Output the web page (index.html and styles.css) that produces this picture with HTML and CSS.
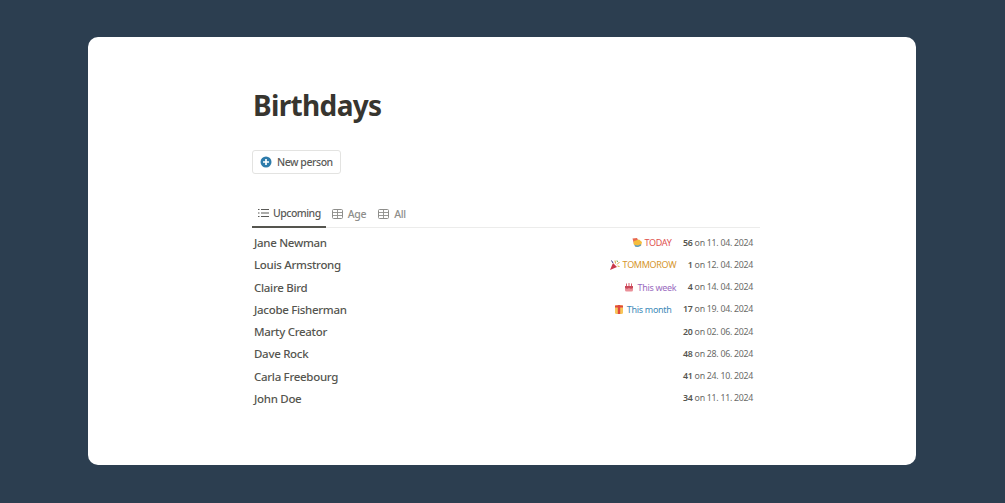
FILE: index.html
```html
<!DOCTYPE html>
<html lang="en">
<head>
<meta charset="utf-8">
<title>Birthdays</title>
<link rel="stylesheet" href="styles.css">
</head>
<body>
<main class="card">
  <div class="content">
    <h1 class="title">Birthdays</h1>
    <button class="new-btn">
      <svg class="plus" viewBox="0 0 12 12"><circle cx="6" cy="6" r="5.500" fill="#2e7cab"/><path d="M6 3v6M3 6h6" stroke="#fff" stroke-width="1.700"/></svg>
      New person
    </button>
    <nav class="tabs">
      <div class="tab active">
        <svg class="tab-ic" viewBox="0 0 11 10"><path d="M3 1.500h8M3 5h8M3 8.500h8M0 1.500h1.500M0 5h1.500M0 8.500h1.500" stroke="#5a5a57" stroke-width="1.100" fill="none"/></svg>
        Upcoming
      </div>
      <div class="tab">
        <svg class="tab-ic" viewBox="0 0 11 10"><rect x=".5" y=".5" width="10" height="9" rx="1" stroke="#8e8e8b" fill="none"/><path d="M.5 3.500h10M.5 6.500h10M5.500 .5v9" stroke="#8e8e8b" stroke-width=".9" fill="none"/></svg>
        Age
      </div>
      <div class="tab">
        <svg class="tab-ic" viewBox="0 0 11 10"><rect x=".5" y=".5" width="10" height="9" rx="1" stroke="#8e8e8b" fill="none"/><path d="M.5 3.500h10M.5 6.500h10M5.500 .5v9" stroke="#8e8e8b" stroke-width=".9" fill="none"/></svg>
        All
      </div>
    </nav>
    <ul class="list">
      <li class="row"><span class="name">Jane Newman</span>
        <span class="tag today"><svg class="emoji" viewBox="0 0 10 10"><path d="M.5 .5L5 0l1.500 3L2 6z" fill="#e8694e"/><path d="M2 3l5-1.500L10 4 9 8 4 9 1.500 6z" fill="#f5bd3c"/><path d="M2.500 6.500c2 1.500 4 1.500 6-.5l.5 1.500-3 1.500-3-.5z" fill="#4d9bd6"/></svg>TODAY</span>
        <span class="date"><b>56</b> on 11. 04. 2024</span></li>
      <li class="row"><span class="name">Louis Armstrong</span>
        <span class="tag tomorrow"><svg class="emoji" viewBox="0 0 10 10"><path d="M3 3l4 4-7 3z" fill="#c9394a"/><path d="M5 .5l.5 3M9.500 2L7 4.500M9.500 6.500L7.500 6" stroke="#d8a93a"/><path d="M1.500 .5l1.500 2.500" stroke="#3a3a80"/><path d="M7 .5l.5 1.500" stroke="#6aa84f"/></svg>TOMMOROW</span>
        <span class="date"><b>1</b> on 12. 04. 2024</span></li>
      <li class="row"><span class="name">Claire Bird</span>
        <span class="tag week"><svg class="emoji" viewBox="0 0 10 10"><rect x="1" y="4" width="8" height="5.500" rx="1.500" fill="#ea8f98"/><path d="M1 4h8v2c-1.500 1-2.500 1-4 0-1.500 1-2.500 1-4 0z" fill="#c9485a"/><path d="M2.500 1.500V4M5 1V4M7.500 1.500V4" stroke="#d9606e"/></svg>This week</span>
        <span class="date"><b>4</b> on 14. 04. 2024</span></li>
      <li class="row"><span class="name">Jacobe Fisherman</span>
        <span class="tag month"><svg class="emoji" viewBox="0 0 10 10"><rect x="1" y="1" width="8" height="9" rx="1.500" fill="#f7c65a"/><path d="M1 1.500h8v2H1z" fill="#e0483f"/><path d="M3.800 1h2.400v9H3.800z" fill="#e0483f"/></svg>This month</span>
        <span class="date"><b>17</b> on 19. 04. 2024</span></li>
      <li class="row"><span class="name">Marty Creator</span><span class="date"><b>20</b> on 02. 06. 2024</span></li>
      <li class="row"><span class="name">Dave Rock</span><span class="date"><b>48</b> on 28. 06. 2024</span></li>
      <li class="row"><span class="name">Carla Freebourg</span><span class="date"><b>41</b> on 24. 10. 2024</span></li>
      <li class="row"><span class="name">John Doe</span><span class="date"><b>34</b> on 11. 11. 2024</span></li>
    </ul>
  </div>
</main>
</body>
</html>
```
FILE: styles.css
```css
* { box-sizing: border-box; }
html, body { height: 100%; }
body {
  margin: 0;
  background: #2c3e50;
  padding: 37px 89px 38px 88px;
  font-family: "Noto Sans", "Open Sans", sans-serif;
  color: #4f4f4c;
}
.card {
  height: 428px;
  background: #fff;
  border-radius: 10px;
  padding: 47px 156px 0 164px;
}
.content { display: flex; flex-direction: column; align-items: stretch; }
.title {
  margin: 0 0 0 1px;
  font-size: 28px;
  line-height: 42px;
  font-weight: 700;
  letter-spacing: -.65px;
  color: #37352f;
}
.new-btn {
  align-self: flex-start;
  margin-top: 24px;
  height: 24px;
  width: 89px;
  padding: 0 0 0 7px;
  display: flex;
  align-items: center;
  gap: 5px;
  background: #fff;
  border: 1px solid #e3e3e1;
  border-radius: 3px;
  font: 500 10.500px "Noto Sans", sans-serif;
  letter-spacing: -.45px;
  color: #5a5a57;
  white-space: nowrap;
}
.plus { width: 12px; height: 12px; flex: none; }
.tabs {
  display: flex;
  margin-top: 25px;
  height: 29px;
  border-bottom: 1px solid #ececeb;
}
.tab {
  display: flex;
  align-items: center;
  gap: 5px;
  padding: 0 6px;
  font-size: 10.500px;
  font-weight: 500;
  letter-spacing: -.3px;
  color: #8e8e8b;
  height: 29px;
  white-space: nowrap;
}
.tab.active {
  gap: 4px;
  padding-right: 5px;
  letter-spacing: -.5px;
  color: #5a5a57;
  border-bottom: 2px solid #55554f;
}
.tab-ic { width: 11px; height: 10px; flex: none; }
.list { list-style: none; margin: 3.400px 0 0; padding: 0 7px 0 2px; }
.row {
  display: flex;
  align-items: center;
  height: 22.250px;
  white-space: nowrap;
}
.name { font-size: 11.500px; font-weight: 500; letter-spacing: -.3px; color: #55554f; margin-right: auto; }
.tag { display: flex; align-items: center; gap: 3px; font-size: 9px; letter-spacing: -.3px; margin-right: 11.500px; }
.emoji { width: 10px; height: 10px; }
.today { color: #e0524f; }
.tomorrow { color: #d6962c; }
.week { color: #9a6cc0; }
.month { color: #3d8ab8; }
.date { font-size: 8.800px; letter-spacing: -.28px; color: #6a6a67; }
.date b { font-weight: 600; color: #55554f; }
```
